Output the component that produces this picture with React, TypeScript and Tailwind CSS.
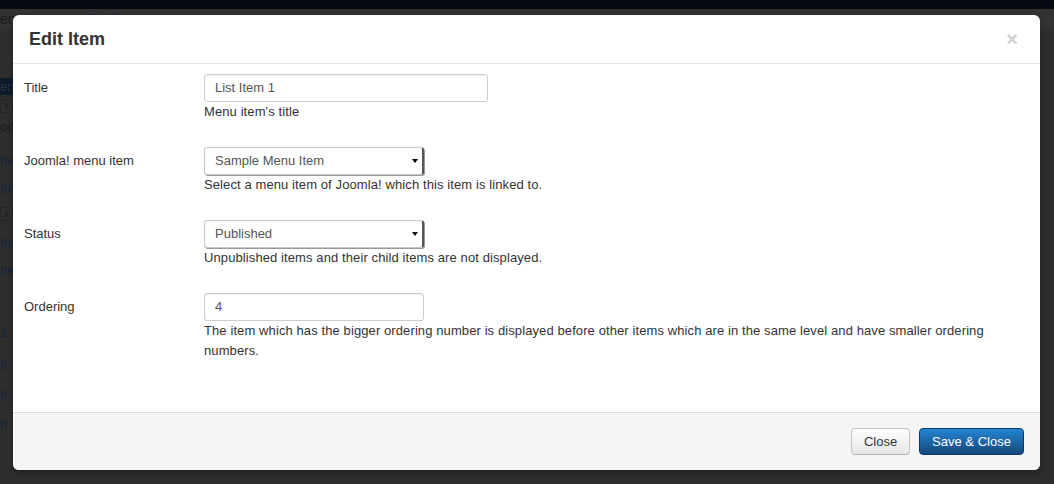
import React from 'react';

const font = { fontFamily: '"Liberation Sans", Arial, sans-serif' };

const Field: React.FC<{ label: string; help: React.ReactNode; children: React.ReactNode; last?: boolean }> = ({
  label,
  help,
  children,
  last,
}) => (
  <div className={`flex ${last ? '' : 'mb-[25px]'}`}>
    <div className="w-[180px] shrink-0 pt-[6px] text-[13px] leading-[16px] text-[#333]">{label}</div>
    <div className="flex-1">
      {children}
      <div className="text-[13px] leading-[20px] tracking-[0.1px] text-[#333] pr-[50px]">{help}</div>
    </div>
  </div>
);

const TextInput: React.FC<{ value: string; width: string }> = ({ value, width }) => (
  <div
    className={`${width} h-[28px] rounded-[3px] border border-[#ccc] bg-white px-[10px] text-[13px] leading-[26px] text-[#555] shadow-[inset_0_1px_1px_rgba(0,0,0,0.075)]`}
  >
    {value}
  </div>
);

const Select: React.FC<{ value: string }> = ({ value }) => (
  <div className="relative flex h-[28px] w-[220px] items-center rounded-[3px] border border-[#c8c8c8] border-r-[#555] border-r-2 bg-white pl-[10px] text-[13px] text-[#555] shadow-[1px_1px_0_#999]">
    {value}
    <span className="absolute right-[4px] top-[11px] h-0 w-0 border-x-[3px] border-t-[4px] border-x-transparent border-t-black" />
  </div>
);

export default function App() {
  return (
    <div className="relative h-[484px] w-full overflow-hidden bg-[#2e2e2e]" style={font}>
      {/* dimmed page behind */}
      <div className="h-[9px] bg-[#060910]" />
      <div className="flex h-[20px] items-center gap-[14px] bg-[#333] text-[14px] text-[#1c1c1c]">
        <span>enu items</span>
        <span className="h-[16px] w-px bg-[#3a3a3a]" />
        <span className="text-[#1c2a3c]">Publishing</span>
      </div>
      <div className="w-[13px] text-[13px] text-[#1b1b1b]">
        <div className="mt-[49px] h-[17px] bg-[#0c1a2b] leading-[17px] text-[#2b3340]">en</div>
        <div className="mt-[4px] h-[14px] rounded-[2px] border border-[#262626] pl-[3px] text-[10px] leading-[12px]">x</div>
        <div className="mt-[6px] h-[16px] leading-[16px]">od</div>
        <div className="mt-[18px] h-[16px] leading-[16px] text-[#152539]">Ite</div>
        <div className="mt-[12px] h-[16px] leading-[16px] text-[#152539]">Ite</div>
        <div className="mt-[10px] h-[14px] border border-[#262626] pl-[3px] text-[10px] leading-[12px]">x</div>
        <div className="mt-[14px] h-[16px] leading-[16px] text-[#152539]">Ite</div>
        <div className="mt-[12px] h-[16px] leading-[16px] text-[#152539]">Ite</div>
        <div className="mt-[46px] h-[16px] leading-[16px] text-[#152539]">1</div>
        <div className="mt-[16px] h-[16px] leading-[16px] text-[#152539]">It</div>
        <div className="mt-[14px] h-[16px] leading-[16px] text-[#152539]">It</div>
        <div className="mt-[14px] h-[16px] leading-[16px] text-[#152539]">It</div>
      </div>

      {/* modal */}
      <div className="absolute left-[13px] top-[15px] flex h-[455px] w-[1027px] flex-col overflow-hidden rounded-[6px] bg-white shadow-[0_3px_7px_rgba(0,0,0,0.3)]">
        <div className="flex h-[49px] shrink-0 items-center justify-between border-b border-[#e5e5e5] pl-[16px] pr-[22px]">
          <h3 className="text-[18px] font-bold leading-[20px] text-[#333]">Edit Item</h3>
          <span className="text-[20px] font-bold leading-[20px] text-[#d0d0d0]">×</span>
        </div>

        <div className="flex-1 pl-[11px] pt-[10px]">
          <Field label="Title" help="Menu item's title">
            <TextInput value="List Item 1" width="w-[284px]" />
          </Field>
          <Field label="Joomla! menu item" help="Select a menu item of Joomla! which this item is linked to.">
            <Select value="Sample Menu Item" />
          </Field>
          <Field label="Status" help="Unpublished items and their child items are not displayed.">
            <Select value="Published" />
          </Field>
          <Field
            label="Ordering"
            last
            help="The item which has the bigger ordering number is displayed before other items which are in the same level and have smaller ordering numbers."
          >
            <TextInput value="4" width="w-[220px]" />
          </Field>
        </div>

        <div className="flex h-[58px] shrink-0 items-start justify-end gap-[9px] border-t border-[#ddd] bg-[#f5f5f5] pr-[16px] pt-[15px]">
          <button className="h-[27px] w-[59px] rounded-[4px] border border-[#c5c5c5] border-b-[#b3b3b3] bg-gradient-to-b from-white to-[#e6e6e6] text-[13px] text-[#333] shadow-[inset_0_1px_0_rgba(255,255,255,0.2)]">
            Close
          </button>
          <button className="h-[27px] w-[105px] rounded-[4px] border border-[#0f3a66] bg-gradient-to-b from-[#2384d3] to-[#15497c] text-[13px] text-white">
            Save &amp; Close
          </button>
        </div>
      </div>
    </div>
  );
}
